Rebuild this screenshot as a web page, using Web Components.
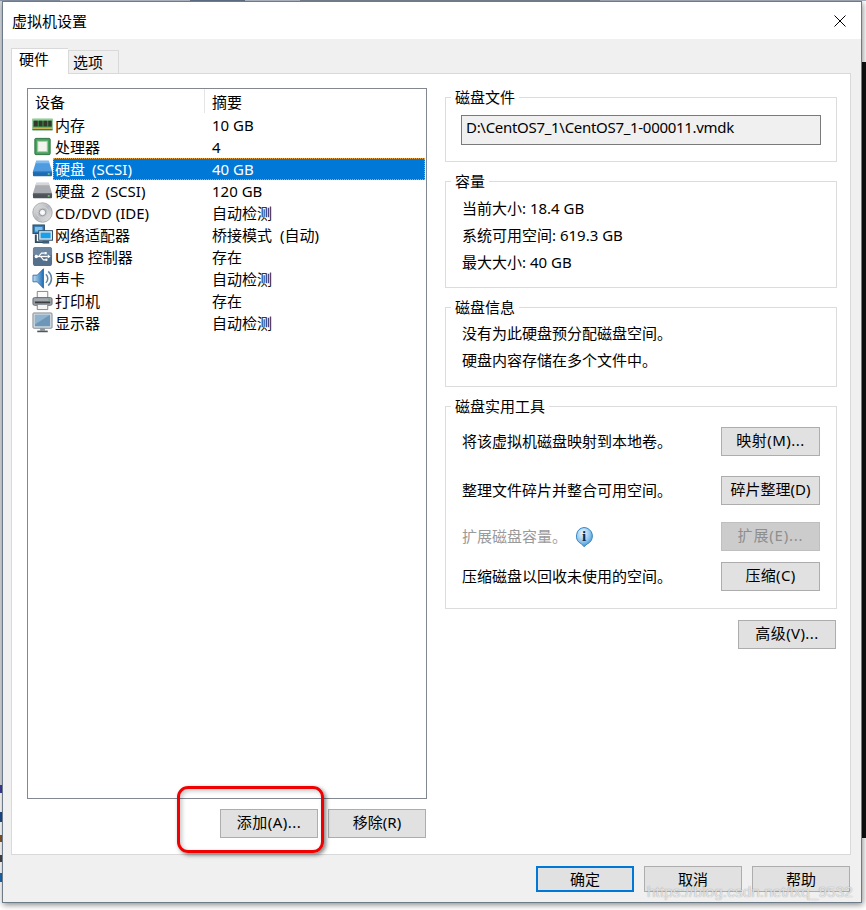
<!DOCTYPE html>
<html lang="zh">
<head>
<meta charset="utf-8">
<title>虚拟机设置</title>
<style>
  html, body { margin: 0; height: 100%; }
  body {
    width: 866px; height: 910px; overflow: hidden; position: relative;
    font: 15px/20px "Noto Sans", "Noto Sans CJK SC", sans-serif;
    color: #000;
    background:
      linear-gradient(90deg, #8a97a8 0 60px, #b9c3cf 60px 190px, #65788f 190px 245px, #b9c3cf 245px 300px, #7d8896 300px 600px, #a9b3bf 600px 866px) 0 0 / 866px 1px no-repeat,
      linear-gradient(180deg, #fff 0 62px, #111 62px 838px, #fff 838px) 862px 0 / 4px 100% no-repeat,
      linear-gradient(180deg, #d6d9dd 0 785px, #3c3c9c 785px 793px, #fff 793px 812px, #1c4c8c 812px 822px, #fff 822px 835px, #885522 835px 842px, #fff 842px 855px, #444 855px 862px, #fff 862px 873px, #1a6ab0 873px 882px, #fff 882px) 0 0 / 2px 100% no-repeat,
      #fff;
  }
</style>
</head>
<body>

<vm-dialog heading="虚拟机设置">
  <vm-tab slot="tabs" active>硬件</vm-tab>
  <vm-tab slot="tabs">选项</vm-tab>

  <vm-hardware-pane>
    <vm-device-list slot="list">
      <vm-device icon="memory"><span>内存</span><span slot="summary">10 GB</span></vm-device>
      <vm-device icon="cpu"><span>处理器</span><span slot="summary">4</span></vm-device>
      <vm-device icon="disk-blue" selected><span style="word-spacing:3px">硬盘 (SCSI)</span><span slot="summary">40 GB</span></vm-device>
      <vm-device icon="disk"><span style="word-spacing:2px">硬盘 2 (SCSI)</span><span slot="summary">120 GB</span></vm-device>
      <vm-device icon="cd"><span>CD/DVD (IDE)</span><span slot="summary">自动检测</span></vm-device>
      <vm-device icon="network"><span>网络适配器</span><span slot="summary"><span style="word-spacing:4px">桥接模式 (自动)</span></span></vm-device>
      <vm-device icon="usb"><span>USB 控制器</span><span slot="summary">存在</span></vm-device>
      <vm-device icon="sound"><span>声卡</span><span slot="summary">自动检测</span></vm-device>
      <vm-device icon="printer"><span>打印机</span><span slot="summary">存在</span></vm-device>
      <vm-device icon="display"><span>显示器</span><span slot="summary">自动检测</span></vm-device>
    </vm-device-list>

    <vm-button slot="list-actions" style="letter-spacing:.5px">添加(A)...</vm-button>
    <vm-button slot="list-actions">移除(R)</vm-button>

    <vm-group heading="磁盘文件" style="--pad: 9px 15px 16px 15px">
      <vm-readonly-field>D:\CentOS7_1\CentOS7_1-000011.vmdk</vm-readonly-field>
    </vm-group>

    <vm-group heading="容量" style="--pad: 5px 15px 11px 16px; --line: 27px; --legend-x: -11px">
      <div>当前大小: 18.4 GB</div>
      <div>系统可用空间: 619.3 GB</div>
      <div>最大大小: 40 GB</div>
    </vm-group>

    <vm-group heading="磁盘信息" style="--pad: 4px 15px 12px 16px; --line: 27px; --legend-x: -11px">
      <div>没有为此硬盘预分配磁盘空间。</div>
      <div>硬盘内容存储在多个文件中。</div>
    </vm-group>

    <vm-group heading="磁盘实用工具" style="--pad: 12px 16px 17px 15px">
      <vm-tool-row gap="20">将该虚拟机磁盘映射到本地卷。<vm-button slot="action" style="letter-spacing:.5px">映射(M)...</vm-button></vm-tool-row>
      <vm-tool-row gap="17">整理文件碎片并整合可用空间。<vm-button slot="action">碎片整理(D)</vm-button></vm-tool-row>
      <vm-tool-row gap="11" disabled>扩展磁盘容量。<vm-info-icon></vm-info-icon><vm-button slot="action" disabled style="letter-spacing:.8px">扩展(E)...</vm-button></vm-tool-row>
      <vm-tool-row>压缩磁盘以回收未使用的空间。<vm-button slot="action" style="letter-spacing:.3px">压缩(C)</vm-button></vm-tool-row>
    </vm-group>

    <vm-button slot="advanced" style="letter-spacing:.4px">高级(V)...</vm-button>
  </vm-hardware-pane>

  <vm-button slot="footer" default short>确定</vm-button>
  <vm-button slot="footer" short>取消</vm-button>
  <vm-button slot="footer" short>帮助</vm-button>
</vm-dialog>

<vm-highlight></vm-highlight>
<vm-watermark>https://blog.csdn.net/lxq_9532</vm-watermark>

<script>
const ICONS = {
  memory: `<svg viewBox="0 0 22 22"><rect x="0.5" y="5" width="21" height="12" fill="#3f9a4a"/><rect x="0.5" y="5" width="21" height="2" fill="#8fd08f"/><rect x="2" y="7" width="4" height="6" fill="#33372f"/><rect x="7" y="7" width="4" height="6" fill="#33372f"/><rect x="12" y="7" width="4" height="6" fill="#33372f"/><rect x="17" y="7" width="3.5" height="6" fill="#33372f"/><rect x="1" y="14" width="20" height="2" fill="#c6b557"/><rect x="0.5" y="16" width="21" height="1" fill="#26703a"/></svg>`,
  cpu: `<svg viewBox="0 0 22 22"><rect x="3" y="2.5" width="16" height="17" rx="1" fill="#45a35c"/><rect x="3" y="2.5" width="16" height="17" rx="1" fill="none" stroke="#2b6e3f"/><rect x="6" y="5.5" width="10" height="11" fill="#f3f5ee" stroke="#a9c9a5"/></svg>`,
  'disk-blue': diskIcon('#4e9be0', '#1f6bb0', '#2c7fc9', '#7fbdf0'),
  disk: diskIcon('#a9adb2', '#4d5358', '#63696f', '#d4d7da'),
  cd: `<svg viewBox="0 0 22 22"><defs><linearGradient id="cd" x1="0" y1="0" x2="1" y2="1"><stop offset="0" stop-color="#e8e8e8"/><stop offset=".5" stop-color="#b6b9bd"/><stop offset="1" stop-color="#eeeeee"/></linearGradient></defs><circle cx="11" cy="11" r="10.2" fill="url(#cd)" stroke="#9b9ea2" stroke-width=".8"/><circle cx="11" cy="11" r="6" fill="none" stroke="#d5d7da"/><circle cx="11" cy="11" r="3.4" fill="#f2f2f2" stroke="#8f9296"/><circle cx="11" cy="11" r="1.3" fill="#fff"/></svg>`,
  network: `<svg viewBox="0 0 22 22"><path d="M4 11v8h10" fill="none" stroke="#2d4a63" stroke-width="2"/><rect x="1" y="1" width="12" height="9" fill="#2f78ad" stroke="#2d4a63"/><rect x="3" y="3" width="8" height="5" fill="#7bc0ee"/><rect x="7" y="7" width="14.5" height="10" fill="#dbe3ea" stroke="#2d4a63"/><rect x="9" y="9" width="10.5" height="6" fill="#19a0ea"/><rect x="11" y="17.5" width="7" height="3" fill="#3d5e78"/></svg>`,
  usb: `<svg viewBox="0 0 22 22"><rect x="1" y="1" width="20" height="20" rx="3" fill="#55708c"/><rect x="1" y="1" width="20" height="9" rx="3" fill="#6d87a1"/><path d="M3.5 11h13" stroke="#fff" stroke-width="1.4"/><circle cx="4.5" cy="11" r="1.8" fill="#fff"/><path d="M7 11l3-3.5h3M9 11l3 3.5h2" fill="none" stroke="#fff" stroke-width="1.2"/><rect x="13" y="6.3" width="2.4" height="2.4" fill="#fff"/><circle cx="15" cy="14.5" r="1.3" fill="#fff"/><path d="M16.5 9l3 2-3 2z" fill="#fff"/></svg>`,
  sound: `<svg viewBox="0 0 22 22"><defs><linearGradient id="sp" x1="0" y1="0" x2="1" y2="0"><stop offset="0" stop-color="#bfe0f7"/><stop offset="1" stop-color="#1f6fb5"/></linearGradient></defs><path d="M1 7.5h4.5L12 .8v20.4L5.5 14.5H1z" fill="url(#sp)" stroke="#1d5a94" stroke-width=".8"/><path d="M14.5 6.5a6 6 0 0 1 0 9M17 3.5a10 10 0 0 1 0 15" fill="none" stroke="#5c86a8" stroke-width="1.6"/></svg>`,
  printer: `<svg viewBox="0 0 22 22"><path d="M5.5 1.5h11v7h-11z" fill="#fafafa" stroke="#7d838a"/><rect x="1" y="8" width="20" height="8" rx="1.5" fill="#a2a6ad" stroke="#62666c"/><rect x="3" y="12" width="16" height="2" fill="#3d3f44"/><circle cx="18" cy="10" r="1" fill="#47c04f"/><path d="M5.5 15h11v5.5h-11z" fill="#f5f5f5" stroke="#7d838a"/></svg>`,
  display: `<svg viewBox="0 0 22 22"><rect x="1" y="1" width="20" height="16" rx="1" fill="#d8dde2" stroke="#7c8790"/><rect x="3" y="3" width="16" height="12" fill="#6e96b8"/><path d="M3 3h16L3 13z" fill="#8fb2cd"/><rect x="8.5" y="17" width="5" height="2.5" fill="#8d959c"/><rect x="5.5" y="19.5" width="11" height="1.7" fill="#4f565c"/></svg>`
};

function diskIcon(top, front, edge, shine) {
  return `<svg viewBox="0 0 22 22"><path d="M4.5 3h13l3.5 11H1z" fill="${top}"/><path d="M4.5 3h13l.8 2.5H3.7z" fill="${shine}"/><rect x="1" y="14" width="20" height="5" rx="1" fill="${front}"/><rect x="1" y="14" width="20" height="1" fill="${edge}"/><rect x="16.5" y="16" width="2" height="1.4" fill="#7be07b"/></svg>`;
}

class VmDialog extends HTMLElement {
  connectedCallback() {
    this.attachShadow({ mode: 'open' });
    this.shadowRoot.innerHTML = `
      <style>
        :host {
          display: flex; flex-direction: column; box-sizing: border-box;
          width: 860px; height: 902px; margin: 1px 0 0 2px;
          border: 1px solid #6d7a88; background: #f0f0f0;
          box-shadow: 1px 2px 6px rgba(0,0,0,.45);
        }
        .title {
          flex: none; height: 37px; background: #fff;
          display: flex; align-items: center; justify-content: space-between;
          padding: 0 15px 0 9px;
        }
        .title svg { width: 12px; height: 12px; }
        .tabs { flex: none; height: 25px; padding: 9px 0 0 8px; display: flex; align-items: flex-end; }
        .panel {
          flex: 1; min-height: 0; display: flex; margin: 0 10px 0 8px;
          border: 1px solid #d9d9d9; background: #fff;
        }
        .footer {
          flex: none; height: 47px; box-sizing: border-box;
          display: flex; justify-content: flex-end; gap: 10px;
          padding: 11px 11px 0 0;
        }
      </style>
      <div class="title">
        <span>${this.getAttribute('heading')}</span>
        <svg viewBox="0 0 12 12"><path d="M.5.5l11 11M11.5.5l-11 11" stroke="#000" fill="none"/></svg>
      </div>
      <div class="tabs"><slot name="tabs"></slot></div>
      <div class="panel"><slot></slot></div>
      <div class="footer"><slot name="footer"></slot></div>
    `;
  }
}

class VmTab extends HTMLElement {
  connectedCallback() {
    this.attachShadow({ mode: 'open' });
    this.shadowRoot.innerHTML = `
      <style>
        :host {
          display: block; box-sizing: border-box; height: 23px; width: 51px;
          background: #f0f0f0; border: 1px solid #d9d9d9; border-bottom: 0;
          margin-bottom: 0; padding-left: 4px; line-height: 23px;
        }
        :host([active]) {
          height: 26px; width: 57px; margin-bottom: -1px; padding-left: 7px;
          background: #fff; border-right: 0; position: relative; z-index: 1; line-height: 21px;
        }
        :host(:not([active])) { border-left: 1px solid #d9d9d9; }
      </style>
      <slot></slot>
    `;
  }
}

class VmHardwarePane extends HTMLElement {
  connectedCallback() {
    this.attachShadow({ mode: 'open' });
    this.shadowRoot.innerHTML = `
      <style>
        :host {
          display: flex; flex: 1; gap: 18px; box-sizing: border-box;
          height: 100%; padding: 14px 13px 16px 15px;
        }
        .left { width: 400px; flex: none; display: flex; flex-direction: column; }
        .left ::slotted(vm-device-list) { flex: 1; }
        .actions { flex: none; display: flex; justify-content: flex-end; gap: 10px; margin: 10px 1px 0 0; }
        .right { width: 392px; flex: none; display: flex; flex-direction: column; gap: 10px; }
        .advanced { display: flex; justify-content: flex-end; margin: 1px 1px 0 0; }
      </style>
      <div class="left">
        <slot name="list"></slot>
        <div class="actions"><slot name="list-actions"></slot></div>
      </div>
      <div class="right">
        <slot></slot>
        <div class="advanced"><slot name="advanced"></slot></div>
      </div>
    `;
  }
}

class VmDeviceList extends HTMLElement {
  connectedCallback() {
    this.attachShadow({ mode: 'open' });
    this.shadowRoot.innerHTML = `
      <style>
        :host { display: block; box-sizing: border-box; border: 1px solid #828790; background: #fff; }
        .head { display: flex; height: 25px; line-height: 26px; }
        .head div:first-child { width: 169px; padding-left: 7px; border-right: 1px solid #e5e5e5; height: 24px; }
        .head div:last-child { padding-left: 7px; }
      </style>
      <div class="head"><div>设备</div><div>摘要</div></div>
      <slot></slot>
    `;
  }
}

class VmDevice extends HTMLElement {
  connectedCallback() {
    this.attachShadow({ mode: 'open' });
    this.shadowRoot.innerHTML = `
      <style>
        :host { display: flex; height: 22px; padding-left: 4px; line-height: 22px; }
        .icon { flex: none; width: 21px; height: 22px; }
        .icon svg { display: block; width: 21px; height: 21px; }
        .cell { flex: 1; display: flex; margin-right: 1px; }
        .name { width: 157px; padding-left: 2px; flex: none; white-space: nowrap; }
        :host([selected]) .cell {
          background: #0078d7; color: #fff;
          outline: 1px dotted #e8a040; outline-offset: -1px;
        }
      </style>
      <div class="icon">${ICONS[this.getAttribute('icon')]}</div>
      <div class="cell">
        <div class="name"><slot></slot></div>
        <div><slot name="summary"></slot></div>
      </div>
    `;
  }
}

class VmGroup extends HTMLElement {
  connectedCallback() {
    this.attachShadow({ mode: 'open' });
    this.shadowRoot.innerHTML = `
      <style>
        :host { display: block; line-height: var(--line, 20px); }
        fieldset {
          margin: 0; min-width: 0; border: 1px solid #dcdcdc;
          padding: var(--pad, 10px 15px);
        }
        legend { margin-left: var(--legend-x, -10px); padding: 0 4px; height: 18px; line-height: 18px; }
      </style>
      <fieldset>
        <legend>${this.getAttribute('heading')}</legend>
        <slot></slot>
      </fieldset>
    `;
  }
}

class VmReadonlyField extends HTMLElement {
  connectedCallback() {
    this.attachShadow({ mode: 'open' });
    this.shadowRoot.innerHTML = `
      <style>
        :host {
          display: block; box-sizing: border-box; height: 30px;
          background: #f0f0f0; border: 1px solid #7a7a7a;
          padding: 0 0 0 4px; line-height: 22px; white-space: nowrap;
          letter-spacing: -.3px;
        }
      </style>
      <slot></slot>
    `;
  }
}

class VmToolRow extends HTMLElement {
  connectedCallback() {
    this.attachShadow({ mode: 'open' });
    const gap = this.getAttribute('gap') || 0;
    this.shadowRoot.innerHTML = `
      <style>
        :host { display: flex; align-items: center; justify-content: space-between; height: 29px; margin-bottom: ${gap}px; }
        :host([disabled]) { color: #9a9a9a; }
        .label { display: flex; align-items: center; gap: 7px; padding: 0 0 2px 1px; }
      </style>
      <div class="label"><slot></slot></div>
      <slot name="action"></slot>
    `;
  }
}

class VmButton extends HTMLElement {
  connectedCallback() {
    this.attachShadow({ mode: 'open' });
    this.shadowRoot.innerHTML = `
      <style>
        :host {
          display: flex; align-items: center; justify-content: center;
          box-sizing: border-box; width: 98px; height: 29px; flex: none;
          background: #e1e1e1; border: 1px solid #adadad; white-space: nowrap;
          color: #000; line-height: 20px; padding-bottom: 4px;
        }
        :host([slot="action"]) { width: 99px; }
        :host([short]) { height: 26px; padding-bottom: 0; }
        :host([default]) { border: 2px solid #0078d7; }
        :host([disabled]) { background: #cccccc; border-color: #bfbfbf; color: #8e8e8e; }
      </style>
      <slot></slot>
    `;
  }
}

class VmInfoIcon extends HTMLElement {
  connectedCallback() {
    this.attachShadow({ mode: 'open' });
    this.shadowRoot.innerHTML = `
      <style>
        :host { display: block; width: 20px; height: 20px; margin-top: 2px; }
        svg { display: block; }
        text { font: bold 15px "Liberation Serif", serif; fill: #0e2c55; }
      </style>
      <svg width="20" height="20" viewBox="0 0 20 20">
        <defs><radialGradient id="b" cx=".4" cy=".3" r=".8"><stop offset="0" stop-color="#eef8ff"/><stop offset=".55" stop-color="#8fc6ee"/><stop offset="1" stop-color="#2a7cc4"/></radialGradient></defs>
        <path d="M10 .5a8.6 8.6 0 0 1 3 16.6l-3 2.6-2.4-2.8A8.6 8.6 0 0 1 10 .5z" fill="url(#b)" stroke="#3b86c4"/>
        <text x="10" y="14" text-anchor="middle">i</text>
      </svg>
    `;
  }
}

class VmHighlight extends HTMLElement {
  connectedCallback() {
    this.attachShadow({ mode: 'open' });
    this.shadowRoot.innerHTML = `
      <style>
        :host {
          position: absolute; left: 177px; top: 786px;
          width: 147px; height: 67px; box-sizing: border-box;
          border: 3px solid #f00000; border-radius: 11px;
          box-shadow: 2px 2px 4px rgba(0,0,0,.5), inset 2px 2px 4px rgba(0,0,0,.22);
        }
      </style>
    `;
  }
}

class VmWatermark extends HTMLElement {
  connectedCallback() {
    this.attachShadow({ mode: 'open' });
    this.shadowRoot.innerHTML = `
      <style>
        :host {
          position: absolute; left: 647px; top: 882px;
          font: 15.5px/20px "Liberation Sans", sans-serif; white-space: nowrap;
          color: rgba(255,255,255,.72); text-shadow: 0 0 1px rgba(70,70,70,.6);
        }
      </style>
      <slot></slot>
    `;
  }
}

customElements.define('vm-dialog', VmDialog);
customElements.define('vm-tab', VmTab);
customElements.define('vm-hardware-pane', VmHardwarePane);
customElements.define('vm-device-list', VmDeviceList);
customElements.define('vm-device', VmDevice);
customElements.define('vm-group', VmGroup);
customElements.define('vm-readonly-field', VmReadonlyField);
customElements.define('vm-tool-row', VmToolRow);
customElements.define('vm-button', VmButton);
customElements.define('vm-info-icon', VmInfoIcon);
customElements.define('vm-highlight', VmHighlight);
customElements.define('vm-watermark', VmWatermark);
</script>
</body>
</html>
